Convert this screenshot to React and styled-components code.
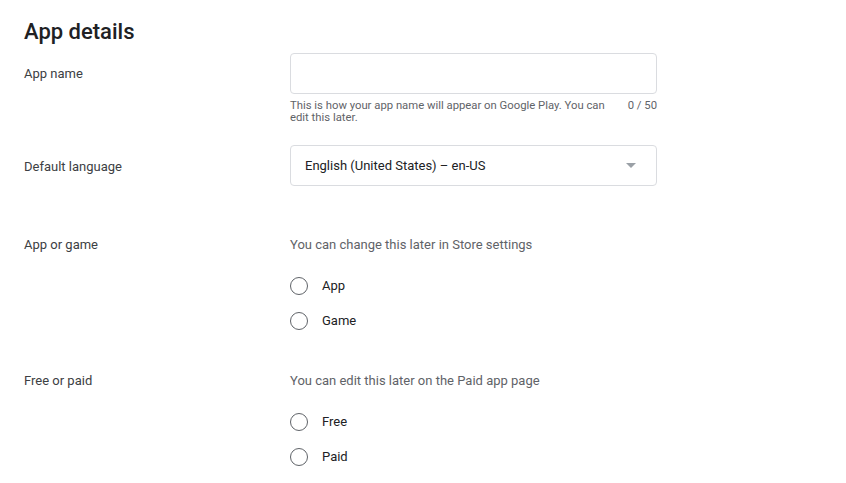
import React from 'react'
import styled, { createGlobalStyle } from 'styled-components'

const GlobalStyle = createGlobalStyle`
  body {
    margin: 0;
    background: #fff;
    font-family: Roboto, "Liberation Sans", sans-serif;
    color: #202124;
  }
`

const Page = styled.div`
  padding: 18px 24px 0 24px;
`

const Title = styled.h2`
  margin: 0 0 7px 0;
  font-size: 22px;
  line-height: 28px;
  font-weight: 500;
  color: #202124;
`

const Row = styled.div`
  display: grid;
  grid-template-columns: 266px 367px;
  margin-top: ${p => p.gap || 0}px;
`

const Label = styled.div`
  font-size: 13px;
  line-height: 20px;
  color: #3c4043;
  padding-top: ${p => p.top || 0}px;
`

const Field = styled.div`
  box-sizing: border-box;
  height: 41px;
  border: 1px solid #dadce0;
  border-radius: 4px;
  display: flex;
  align-items: center;
  padding: 0 14px;
  font-size: 13px;
  color: #202124;
  justify-content: space-between;
`

const Hint = styled.div`
  display: flex;
  justify-content: space-between;
  gap: 20px;
  margin-top: 6px;
  font-size: 11.3px;
  line-height: 12px;
  color: #5f6368;
`

const HintText = styled.span`
  max-width: 325px;
`

const Counter = styled.span`
  white-space: nowrap;
`

const Caret = styled.span`
  width: 0;
  height: 0;
  border-left: 5px solid transparent;
  border-right: 5px solid transparent;
  border-top: 5px solid #9aa0a6;
  margin-right: 6px;
`

const Note = styled.div`
  font-size: 13px;
  line-height: 20px;
  color: #5f6368;
`

const RadioList = styled.div`
  margin-top: 13px;
  display: flex;
  flex-direction: column;
`

const RadioItem = styled.label`
  display: flex;
  align-items: center;
  height: 35px;
  font-size: 13px;
  color: #202124;
`

const Circle = styled.span`
  box-sizing: border-box;
  width: 18px;
  height: 18px;
  border: 1.5px solid #5f6368;
  border-radius: 50%;
  margin-right: 14px;
`

const Radios = ({ items }) => (
  <RadioList>
    {items.map(i => (
      <RadioItem key={i}>
        <Circle />
        {i}
      </RadioItem>
    ))}
  </RadioList>
)

export default function App() {
  return (
    <>
      <GlobalStyle />
      <Page>
        <Title>App details</Title>
        <Row>
          <Label top={11}>App name</Label>
          <div>
            <Field />
            <Hint>
              <HintText>This is how your app name will appear on Google Play. You can edit this later.</HintText>
              <Counter>0 / 50</Counter>
            </Hint>
          </div>
        </Row>
        <Row gap={21}>
          <Label top={12}>Default language</Label>
          <Field>
            English (United States) – en-US
            <Caret />
          </Field>
        </Row>
        <Row gap={49}>
          <Label>App or game</Label>
          <div>
            <Note>You can change this later in Store settings</Note>
            <Radios items={['App', 'Game']} />
          </div>
        </Row>
        <Row gap={33}>
          <Label>Free or paid</Label>
          <div>
            <Note>You can edit this later on the Paid app page</Note>
            <Radios items={['Free', 'Paid']} />
          </div>
        </Row>
      </Page>
    </>
  )
}
